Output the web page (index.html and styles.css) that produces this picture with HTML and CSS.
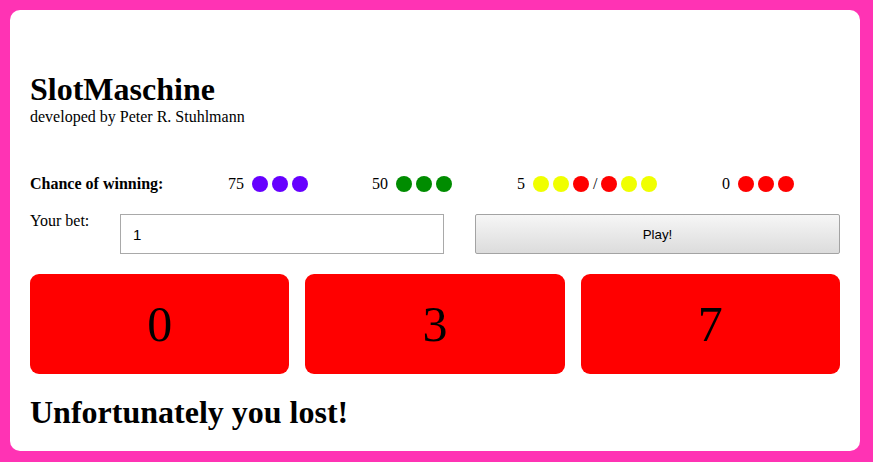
FILE: index.html
```html
<!DOCTYPE html>
<html lang="en">
<head>
<meta charset="utf-8">
<title>SlotMaschine</title>
<link rel="stylesheet" href="styles.css">
</head>
<body>
<main class="card">
  <h1 class="title">SlotMaschine</h1>
  <p class="subtitle">developed by Peter R. Stuhlmann</p>

  <div class="chances">
    <div class="chances-label">Chance of winning:</div>
    <div class="chance">
      <span class="num">75</span>
      <span class="dot purple"></span><span class="dot purple"></span><span class="dot purple"></span>
    </div>
    <div class="chance">
      <span class="num">50</span>
      <span class="dot green"></span><span class="dot green"></span><span class="dot green"></span>
    </div>
    <div class="chance">
      <span class="num">5</span>
      <span class="dot yellow"></span><span class="dot yellow"></span><span class="dot red"></span>
      <span class="slash">/</span>
      <span class="dot red"></span><span class="dot yellow"></span><span class="dot yellow"></span>
    </div>
    <div class="chance">
      <span class="num">0</span>
      <span class="dot red"></span><span class="dot red"></span><span class="dot red"></span>
    </div>
  </div>

  <div class="bet-row">
    <label class="bet-label" for="bet">Your bet:</label>
    <input class="bet-input" id="bet" type="text" value="1">
    <button class="play-btn" type="button">Play!</button>
  </div>

  <div class="slots">
    <div class="slot">0</div>
    <div class="slot">3</div>
    <div class="slot">7</div>
  </div>

  <h1 class="result">Unfortunately you lost!</h1>
</main>
</body>
</html>
```

FILE: styles.css
```css
html, body {
  margin: 0;
  padding: 0;
}

body {
  background: #ff33b4;
  font-family: "Liberation Serif", "Times New Roman", serif;
  color: #000;
  font-size: 16px;
  padding: 10px;
  min-height: 462px;
  box-sizing: border-box;
}

.card {
  width: 850px;
  height: 441px;
  box-sizing: border-box;
  background: #fff;
  border-radius: 10px;
  padding: 61px 20px 0;
}

.title {
  margin: 0;
  font-size: 32px;
  font-weight: bold;
  line-height: normal;
}

.subtitle {
  margin: 0;
  font-size: 16px;
  line-height: normal;
}

.chances {
  margin-top: 49px;
  display: grid;
  grid-template-columns: 198px 144px 145px 205px 1fr;
  align-items: center;
}

.chances-label {
  font-weight: bold;
}

.chance {
  display: flex;
  align-items: center;
  gap: 4px;
}

.num {
  margin-right: 4px;
}

.slash {
  line-height: normal;
}

.dot {
  width: 16px;
  height: 16px;
  border-radius: 50%;
  display: inline-block;
}

.purple { background: #6600ff; }
.green { background: #008c00; }
.yellow { background: #f0ff00; }
.red { background: #ff0000; }

.bet-row {
  margin-top: 19px;
  display: grid;
  grid-template-columns: 90px 324px 1fr;
  align-items: start;
}

.bet-label {
  line-height: normal;
}

.bet-input {
  margin-top: 2px;
  height: 40px;
  box-sizing: border-box;
  border: 1px solid #a9a9a9;
  padding: 0 12px;
  font-family: "Liberation Sans", Arial, sans-serif;
  font-size: 15px;
  color: #000;
  outline: none;
  width: 100%;
}

.play-btn {
  margin-top: 2px;
  margin-left: 31px;
  height: 40px;
  box-sizing: border-box;
  border: 1px solid #a3a3a3;
  border-radius: 2px;
  background: linear-gradient(#f6f6f6, #dcdcdc);
  font-family: "Liberation Sans", Arial, sans-serif;
  font-size: 13.33px;
  color: #000;
}

.slots {
  margin-top: 20px;
  display: grid;
  grid-template-columns: repeat(3, 1fr);
  gap: 16px;
}

.slot {
  height: 100px;
  background: #ff0000;
  border-radius: 9px;
  display: flex;
  align-items: center;
  justify-content: center;
  font-size: 50px;
}

.result {
  margin: 20px 0 0;
  font-size: 32px;
  font-weight: bold;
  line-height: normal;
}
```
